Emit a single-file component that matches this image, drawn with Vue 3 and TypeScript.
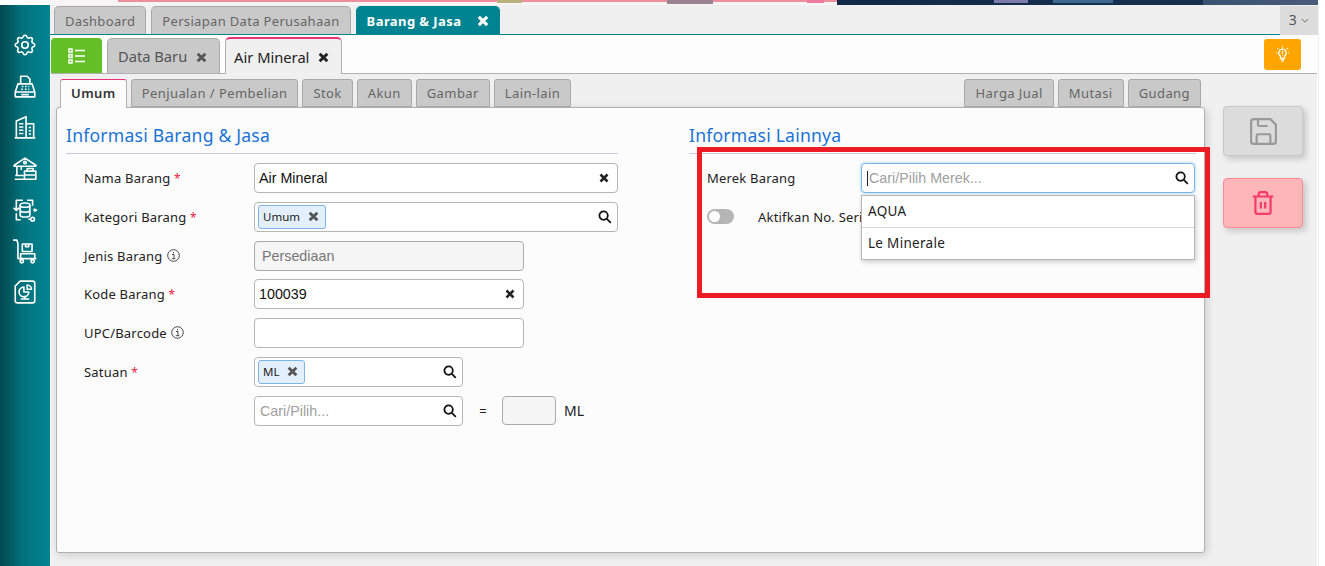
<script setup lang="ts">
type Tab = { label: string; active?: boolean }

const pageTabs: Tab[] = [{ label: 'Dashboard' }, { label: 'Persiapan Data Perusahaan' }]
const formTabs = ['Penjualan / Pembelian', 'Stok', 'Akun', 'Gambar', 'Lain-lain']
const sideTabs = ['Harga Jual', 'Mutasi', 'Gudang']
</script>

<template>
  <div class="app">
    <div class="banner">
      <i class="line"></i>
      <i class="spot spot-a"></i>
      <i class="spot spot-b"></i>
      <i class="spot spot-c"></i>
      <i class="night"></i>
      <i class="spot spot-d"></i>
      <i class="spot spot-e"></i>
    </div>
    <div class="shell">
      <aside class="sidebar">
        <svg viewBox="0 0 24 24" class="nav"><path d="M10.325 4.317c.426-1.756 2.924-1.756 3.35 0a1.724 1.724 0 0 0 2.573 1.066c1.543-.94 3.31.826 2.37 2.37a1.724 1.724 0 0 0 1.065 2.572c1.756.426 1.756 2.924 0 3.35a1.724 1.724 0 0 0-1.066 2.573c.94 1.543-.826 3.31-2.37 2.37a1.724 1.724 0 0 0-2.572 1.065c-.426 1.756-2.924 1.756-3.35 0a1.724 1.724 0 0 0-2.573-1.066c-1.543.94-3.31-.826-2.37-2.37a1.724 1.724 0 0 0-1.065-2.572c-1.756-.426-1.756-2.924 0-3.35a1.724 1.724 0 0 0 1.066-2.573c-.94-1.543.826-3.31 2.37-2.37.996.608 2.296.07 2.572-1.065z"/><circle cx="12" cy="12" r="3"/></svg>
        <svg viewBox="0 0 24 24" class="nav"><path d="M8 10V3h6l2.500 2.500V10M5.500 10h13L21 17.500H3zM3 17.500V22h18v-4.500M8.500 20h7M9 12.500h1.500M12 12.500h1.500M15 12.500h1M8.500 15h1.500M12 15h1.500M15 15h1"/></svg>
        <svg viewBox="0 0 24 24" class="nav"><path d="M2.500 22h19M4 22V6.500L13 2.500V22M13 9h7v13M6.500 9h4M6.500 12h4M6.500 15h4M6.500 18h4M15.500 12.500h2M15.500 15.500h2M15.500 18.500h2"/></svg>
        <svg viewBox="0 0 24 24" class="nav"><path d="M2 8.500 12 2l10 6.500v1H2zM4.500 9.500V18M8.500 9.500V13M2.500 21.500h8.500M3 18h7.500M11.500 14h10.500v7.500H11.500zM14 14v-2.500h5.500V14M11.500 17.500h10.500"/><circle cx="12" cy="6" r="1.200"/></svg>
        <svg viewBox="0 0 24 24" class="nav"><ellipse cx="12" cy="7.500" rx="4.500" ry="2"/><path d="M7.500 7.500v9c0 2.600 9 2.600 9 0v-9M7.500 12c0 2.600 9 2.600 9 0M10 3H4v9M1.500 10 4 12.500 6.500 10M14 3h5v5M19.500 12h3M20 11l2.500 1-2 1.500M4 15v6h4M15 20.500h2.500"/><circle cx="19" cy="20.500" r="1.700"/></svg>
        <svg viewBox="0 0 24 24" class="nav"><path d="M1 2h3.500L5.500 5v14h17M9.500 5.500h9v7h-9zM12.500 5.500V8h3V5.500M8 14.500h13V19H8z"/><circle cx="9" cy="21.500" r="1.500"/><circle cx="19" cy="21.500" r="1.500"/></svg>
        <svg viewBox="0 0 24 24" class="nav"><path d="M7.500 2H19a2 2 0 0 1 2 2v16a2 2 0 0 1-2 2H5a2 2 0 0 1-2-2V6.500zM8 18.500h8M12 15.500v3"/><path d="M11 7.500a4.500 4.500 0 1 0 4.500 4.500H11zM14 5.500a4 4 0 0 1 4 4h-4z"/></svg>
      </aside>
      <main class="work">
        <div class="page-tabs">
          <div v-for="tab in pageTabs" :key="tab.label" class="page-tab">{{ tab.label }}</div>
          <div class="page-tab on">Barang &amp; Jasa <svg class="x x-white" viewBox="0 0 10 10"><path d="M1.500 1.500l7 7m0-7l-7 7"/></svg></div>
          <div class="more">3 <svg viewBox="0 0 10 6"><path d="M1 1l4 4 4-4"/></svg></div>
        </div>
        <div class="content">
          <div class="doc-tabs">
            <button class="list-btn">
              <svg viewBox="0 0 18 16"><path d="M1 1h3v3H1zM1 6.500h3v3H1zM1 12h3v3H1zM7 2.500h10M7 8h10M7 13.500h10"/></svg>
            </button>
            <div class="doc-tab">Data Baru <svg class="x x-doc" viewBox="0 0 10 10"><path d="M1.500 1.500l7 7m0-7l-7 7"/></svg></div>
            <div class="doc-tab on">Air Mineral <svg class="x x-doc dark" viewBox="0 0 10 10"><path d="M1.500 1.500l7 7m0-7l-7 7"/></svg></div>
            <button class="tip">
              <svg viewBox="0 0 16 16"><path d="M8 3.500a3.200 3.200 0 0 0-1.800 5.800v1.700h3.600V9.300A3.200 3.200 0 0 0 8 3.500zM8 5v2.500M8 8.300v.6M6.500 12.300h3M7.200 13.800h1.600M8 1v1M2.500 6.500h1M12.500 6.500h1M3.700 2.700l.7.700M12.300 2.700l-.7.700"/></svg>
            </button>
          </div>
          <div class="body">
            <div class="left">
              <div class="form-tabs">
                <div class="form-tab on">Umum</div>
                <div v-for="tab in formTabs" :key="tab" class="form-tab">{{ tab }}</div>
                <div class="gap"></div>
                <div v-for="tab in sideTabs" :key="tab" class="form-tab">{{ tab }}</div>
              </div>
              <div class="panel">
                <section class="col col-a">
                  <h2>Informasi Barang &amp; Jasa</h2>
                  <div class="row">
                    <label>Nama Barang <b>*</b></label>
                    <div class="field w-l"><span class="val">Air Mineral</span><svg class="x x-sm" viewBox="0 0 10 10"><path d="M1.500 1.500l7 7m0-7l-7 7"/></svg></div>
                  </div>
                  <div class="row">
                    <label>Kategori Barang <b>*</b></label>
                    <div class="field w-l"><span class="chip">Umum <svg class="x x-chip" viewBox="0 0 10 10"><path d="M1.500 1.500l7 7m0-7l-7 7"/></svg></span><svg class="lens" viewBox="0 0 14 14"><circle cx="5.600" cy="5.600" r="4.200"/><path d="M8.800 8.800l4 4"/></svg></div>
                  </div>
                  <div class="row">
                    <label>Jenis Barang <svg class="info" viewBox="0 0 13 13"><circle cx="6.500" cy="6.500" r="5.800"/><path d="M5 5.500h2v4M4.800 9.700h3.600M6.500 3v1.300"/></svg></label>
                    <div class="field w-m off"><span class="val grey">Persediaan</span></div>
                  </div>
                  <div class="row">
                    <label>Kode Barang <b>*</b></label>
                    <div class="field w-m"><span class="val">100039</span><svg class="x x-sm" viewBox="0 0 10 10"><path d="M1.500 1.500l7 7m0-7l-7 7"/></svg></div>
                  </div>
                  <div class="row">
                    <label>UPC/Barcode <svg class="info" viewBox="0 0 13 13"><circle cx="6.500" cy="6.500" r="5.800"/><path d="M5 5.500h2v4M4.800 9.700h3.600M6.500 3v1.300"/></svg></label>
                    <div class="field w-m"></div>
                  </div>
                  <div class="row">
                    <label>Satuan <b>*</b></label>
                    <div class="field w-s"><span class="chip">ML <svg class="x x-chip" viewBox="0 0 10 10"><path d="M1.500 1.500l7 7m0-7l-7 7"/></svg></span><svg class="lens" viewBox="0 0 14 14"><circle cx="5.600" cy="5.600" r="4.200"/><path d="M8.800 8.800l4 4"/></svg></div>
                  </div>
                  <div class="row">
                    <label></label>
                    <div class="field w-s"><span class="val hint">Cari/Pilih...</span><svg class="lens" viewBox="0 0 14 14"><circle cx="5.600" cy="5.600" r="4.200"/><path d="M8.800 8.800l4 4"/></svg></div>
                    <span class="eq">=</span>
                    <div class="field qty off"></div>
                    <span class="unit">ML</span>
                  </div>
                </section>
                <section class="col col-b">
                  <h2>Informasi Lainnya</h2>
                  <div class="row">
                    <label class="short">Merek Barang</label>
                    <div class="field focus w-r"><span class="caret"></span><span class="val hint">Cari/Pilih Merek...</span><svg class="lens" viewBox="0 0 14 14"><circle cx="5.600" cy="5.600" r="4.200"/><path d="M8.800 8.800l4 4"/></svg></div>
                  </div>
                  <div class="row">
                    <span class="switch"><i></i></span>
                    <span class="serial">Aktifkan No. Seri</span>
                  </div>
                  <ul class="menu">
                    <li>AQUA</li>
                    <li>Le Minerale</li>
                  </ul>
                  <div class="redbox"></div>
                </section>
              </div>
            </div>
            <div class="actions">
              <button class="act save">
                <svg viewBox="0 0 24 24"><path d="M3 5a2 2 0 0 1 2-2h12l4 4v12a2 2 0 0 1-2 2H5a2 2 0 0 1-2-2zM7 21v-6a1 1 0 0 1 1-1h8a1 1 0 0 1 1 1v6M8 3v4a1 1 0 0 0 1 1h6"/></svg>
              </button>
              <button class="act del">
                <svg viewBox="0 0 24 24"><path d="M2.500 6h19M8 6V4a2 2 0 0 1 2-2h4a2 2 0 0 1 2 2v2M5 6v14a2 2 0 0 0 2 2h10a2 2 0 0 0 2-2V6M10 11v6M14 11v6"/></svg>
              </button>
            </div>
          </div>
        </div>
      </main>
      <div class="edge"></div>
    </div>
  </div>
</template>

<style>
body {
  margin: 0;
  overflow: hidden;
  background: #fff;
}
</style>

<style scoped>
.app {
  width: 1325px;
  height: 566px;
  display: flex;
  flex-direction: column;
  font-family: "Noto Sans", "Open Sans", sans-serif;
  font-size: 13px;
  color: #222;
  overflow: hidden;
}

.banner {
  height: 5px;
  flex: none;
  background: linear-gradient(90deg, #fff 0, #fff 50px, #f6f4f4 50px, #f6f4f4 1318px, #fff 1318px);
  position: relative;
  overflow: hidden;
}

.banner i {
  position: absolute;
  top: 0;
  display: block;
}

.line {
  left: 118px;
  width: 719px;
  height: 2px;
  background: #ee8d9b;
}

.night {
  left: 837px;
  width: 481px;
  height: 5px;
  background: linear-gradient(90deg, #12294a 0, #17304f 76%, #3a5270 76.200%, #475c78 100%);
}

.spot {
  height: 3px;
  z-index: 1;
}

.spot-a { left: 497px; width: 25px; background: #b9b27a; }
.spot-b { left: 667px; width: 46px; height: 4px; background: #9a8293; }
.spot-c { left: 807px; width: 17px; background: #f07aa0; }
.spot-d { left: 994px; width: 34px; background: #7c7aa6; }
.spot-e { left: 1053px; width: 60px; background: #3e6a92; }

.shell {
  flex: 1;
  display: flex;
  min-height: 0;
}

.sidebar {
  width: 50px;
  flex: none;
  background: linear-gradient(90deg, #04474e 0, #02727c 45%, #018591 100%);
  display: flex;
  flex-direction: column;
  align-items: center;
  padding-top: 27px;
  gap: 15.200px;
  box-sizing: border-box;
}

.nav {
  width: 26px;
  height: 26px;
  fill: none;
  stroke: #fff;
  stroke-width: 1.500;
  stroke-linejoin: round;
  flex: none;
}

.work {
  width: 1267px;
  flex: none;
  background: #f0f0f0;
  display: flex;
  flex-direction: column;
}

.page-tabs {
  height: 29px;
  flex: none;
  display: flex;
  align-items: flex-end;
  gap: 5px;
  padding-left: 4px;
  border-bottom: 1px solid #058590;
}

.page-tab {
  height: 28px;
  box-sizing: border-box;
  padding: 0 10px;
  display: flex;
  align-items: center;
  background: #c9c9c9;
  border: 1px solid #a9a9a9;
  border-bottom: 0;
  border-radius: 5px 5px 0 0;
  color: #666;
  letter-spacing: .33px;
  white-space: pre;
}

.page-tab.on {
  background: #018491;
  border-color: #018491;
  color: #fff;
  font-weight: 700;
  letter-spacing: .42px;
}

.x {
  fill: none;
  stroke: #555;
  stroke-width: 2.600;
  flex: none;
}

.x-white {
  width: 12px;
  height: 12px;
  stroke: #fff;
  margin-left: 12px;
}

.x-doc {
  width: 11px;
  height: 11px;
  margin-left: 5px;
  margin-top: 2px;
}

.x-doc.dark {
  stroke: #222;
}

.x-sm {
  width: 10px;
  height: 10px;
  stroke: #222;
  margin-right: 3px;
}

.x-chip {
  width: 11px;
  height: 11px;
  margin-left: 5px;
}

.more {
  margin-left: auto;
  margin-right: -1px;
  width: 38px;
  height: 29px;
  background: #dcdcdc;
  color: #555;
  font-size: 14px;
  line-height: 28px;
  text-align: center;
  margin-bottom: -1px;
  flex: none;
}

.more svg {
  width: 8px;
  height: 5px;
  fill: none;
  stroke: #555;
  margin-left: 1px;
  vertical-align: 2px;
}

.content {
  flex: 1;
  min-height: 0;
  border-left: 1px solid #fafafa;
  background: #f0f0f0;
  display: flex;
  flex-direction: column;
}

.doc-tabs {
  height: 39px;
  flex: none;
  box-sizing: border-box;
  background: #fdfdfd;
  border-bottom: 1px solid #b1b1b1;
  display: flex;
  align-items: flex-end;
  gap: 5px;
  padding-right: 16px;
}

.list-btn {
  width: 51px;
  height: 35px;
  border: 0;
  background: #64bf26;
  border-radius: 4px 4px 0 0;
  padding: 0;
}

.list-btn svg {
  width: 18px;
  height: 16px;
  fill: none;
  stroke: #fff;
  stroke-width: 1.500;
  display: block;
  margin: 1px auto 0;
}

.doc-tab {
  height: 35px;
  box-sizing: border-box;
  padding: 0 12px 0 10px;
  display: flex;
  align-items: center;
  background: #c9c9c9;
  border: 1px solid #a9a9a9;
  border-bottom: 0;
  border-radius: 5px 5px 0 0;
  color: #555;
  font-size: 14.700px;
  white-space: pre;
}

.doc-tab.on {
  background: #f0f0f0;
  border-color: #b1b1b1;
  border-top: 2px solid #ec2f7b;
  color: #222;
  height: 37px;
  margin-bottom: -1px;
  padding: 0 12px 0 8px;
}

.tip {
  margin-left: auto;
  width: 37px;
  height: 31px;
  border: 0;
  border-radius: 3px;
  background: #ffa500;
  margin-bottom: 3px;
  padding: 0;
}

.tip svg {
  width: 19px;
  height: 19px;
  fill: none;
  stroke: #fff;
  stroke-width: 1;
  display: block;
  margin: auto;
}

.body {
  flex: 1;
  min-height: 0;
  display: flex;
  padding: 5px 0 0 5px;
}

.left {
  width: 1149px;
  flex: none;
  display: flex;
  flex-direction: column;
}

.form-tabs {
  height: 28px;
  flex: none;
  display: flex;
  align-items: flex-end;
  gap: 4px;
  padding-left: 4px;
  padding-right: 4px;
  position: relative;
  z-index: 1;
}

.form-tab {
  height: 28px;
  box-sizing: border-box;
  padding: 0 10px;
  line-height: 27px;
  background: #c9c9c9;
  border: 1px solid #a9a9a9;
  border-radius: 3px 3px 0 0;
  color: #666;
  letter-spacing: .42px;
}

.form-tab.on {
  background: #fcfcfc;
  border-color: #b1b1b1;
  border-top: 1px solid #ec2f7b;
  border-bottom: 0;
  color: #333;
  font-weight: 600;
  height: 29px;
  margin-bottom: -1px;
}

.gap {
  flex: 1;
}

.panel {
  flex: 1;
  min-height: 0;
  margin-bottom: 13px;
  background: #fcfcfc;
  border: 1px solid #b1b1b1;
  border-radius: 3px;
  box-shadow: 2px 2px 8px rgba(0, 0, 0, .15);
  display: flex;
  box-sizing: border-box;
}

.col {
  position: relative;
  box-sizing: border-box;
}

.col-a {
  width: 623px;
  padding: 15px 62px 0 9px;
}

.col-b {
  flex: 1;
  padding: 15px 8px 0 9px;
}

h2 {
  margin: 0 0 9px;
  height: 31px;
  box-sizing: border-box;
  font-size: 17.600px;
  line-height: 25px;
  font-weight: 400;
  color: #1a73d5;
  border-bottom: 1px solid #c4cbdc;
  letter-spacing: .2px;
}

.row {
  display: flex;
  align-items: center;
  height: 30px;
  margin-bottom: 8.800px;
  padding-left: 18px;
}

label {
  width: 170px;
  flex: none;
  color: #222;
  letter-spacing: .2px;
}

label.short {
  width: 154px;
}

label b {
  color: #f02040;
  font-weight: 400;
  font-size: 12px;
}

.info {
  width: 13px;
  height: 13px;
  fill: none;
  stroke: #333;
  stroke-width: .9;
  vertical-align: -1px;
  margin-left: 1px;
}

.field {
  height: 30px;
  box-sizing: border-box;
  border: 1px solid #b5b5b5;
  border-radius: 4px;
  background: #fff;
  display: flex;
  align-items: center;
  padding: 0 5px 0 4px;
  font-family: "Liberation Sans", Arial, sans-serif;
  font-size: 14.300px;
  position: relative;
}

.w-l { width: 364px; }
.w-m { width: 270px; }
.w-s { width: 209px; }
.w-r { width: 334px; }
.qty { width: 54px; height: 29px; }

.off {
  background: #f5f5f5;
  border-color: #aaa;
}

.focus {
  border-color: #76b7ee;
  box-shadow: 0 0 3px rgba(70, 160, 240, .5);
}

.val {
  flex: 1;
  color: #111;
}

.grey { color: #777; padding-left: 3px; }
.hint { color: #a0a0a0; padding-left: 1px; }

.caret {
  width: 1px;
  height: 15px;
  background: #222;
  margin-left: 1px;
}

.chip {
  height: 24px;
  box-sizing: border-box;
  border: 1px solid #7eb3ea;
  border-radius: 3px;
  background: #e3effc;
  padding: 0 6px 0 4px;
  display: inline-flex;
  align-items: center;
  font-family: "Noto Sans", sans-serif;
  font-size: 11.500px;
  color: #222;
  margin-left: -1px;
  white-space: pre;
}

.lens {
  margin-left: auto;
  width: 14px;
  height: 14px;
  fill: none;
  stroke: #111;
  stroke-width: 1.800;
}

.eq {
  width: 39px;
  text-align: center;
  font-size: 13px;
  padding-left: 1px;
  box-sizing: border-box;
}

.unit {
  margin-left: 8px;
  font-size: 14px;
}

.switch {
  width: 27px;
  height: 15px;
  border-radius: 8px;
  background: #b5b5b5;
  position: relative;
  flex: none;
}

.switch i {
  position: absolute;
  top: 2px;
  left: 2px;
  width: 11px;
  height: 11px;
  border-radius: 50%;
  background: #fff;
}

.serial {
  margin-left: 24px;
  white-space: nowrap;
  letter-spacing: .2px;
}

.menu {
  position: absolute;
  left: 181px;
  top: 87px;
  width: 334px;
  margin: 0;
  padding: 0;
  list-style: none;
  box-sizing: border-box;
  background: #fff;
  border: 1px solid #b5b5b5;
  box-shadow: 1px 2px 5px rgba(0, 0, 0, .2);
  z-index: 2;
  font-size: 13.500px;
}

.menu li {
  height: 31px;
  line-height: 31px;
  padding-left: 6px;
  letter-spacing: .3px;
}

.menu li + li {
  border-top: 1px solid #d8d8d8;
}

.redbox {
  position: absolute;
  left: 17px;
  top: 39px;
  width: 513px;
  height: 151px;
  box-sizing: border-box;
  border: 5px solid #ed1c24;
  z-index: 3;
  pointer-events: none;
}

.actions {
  flex: 1;
  display: flex;
  flex-direction: column;
  align-items: flex-start;
  gap: 22px;
  padding: 27px 0 0 18px;
}

.act {
  width: 80px;
  height: 50px;
  border-radius: 4px;
  box-shadow: 3px 3px 6px rgba(0, 0, 0, .18);
  padding: 0;
  display: flex;
  align-items: center;
  justify-content: center;
}

.act svg {
  fill: none;
  stroke-linejoin: round;
}

.save {
  background: #dcdcdc;
  border: 1px solid #c8c8c8;
}

.save svg {
  width: 33px;
  height: 33px;
  stroke: #999;
  stroke-width: 1.600;
}

.del {
  background: #ffb6b9;
  border: 1px solid #fc8a96;
}

.del svg {
  width: 26px;
  height: 26px;
  stroke: #f33a6a;
  stroke-width: 2;
}

.edge {
  flex: 1;
  margin-left: 1px;
  background: #fff;
  border-left: 1px solid #f0f0f0;
}
</style>
